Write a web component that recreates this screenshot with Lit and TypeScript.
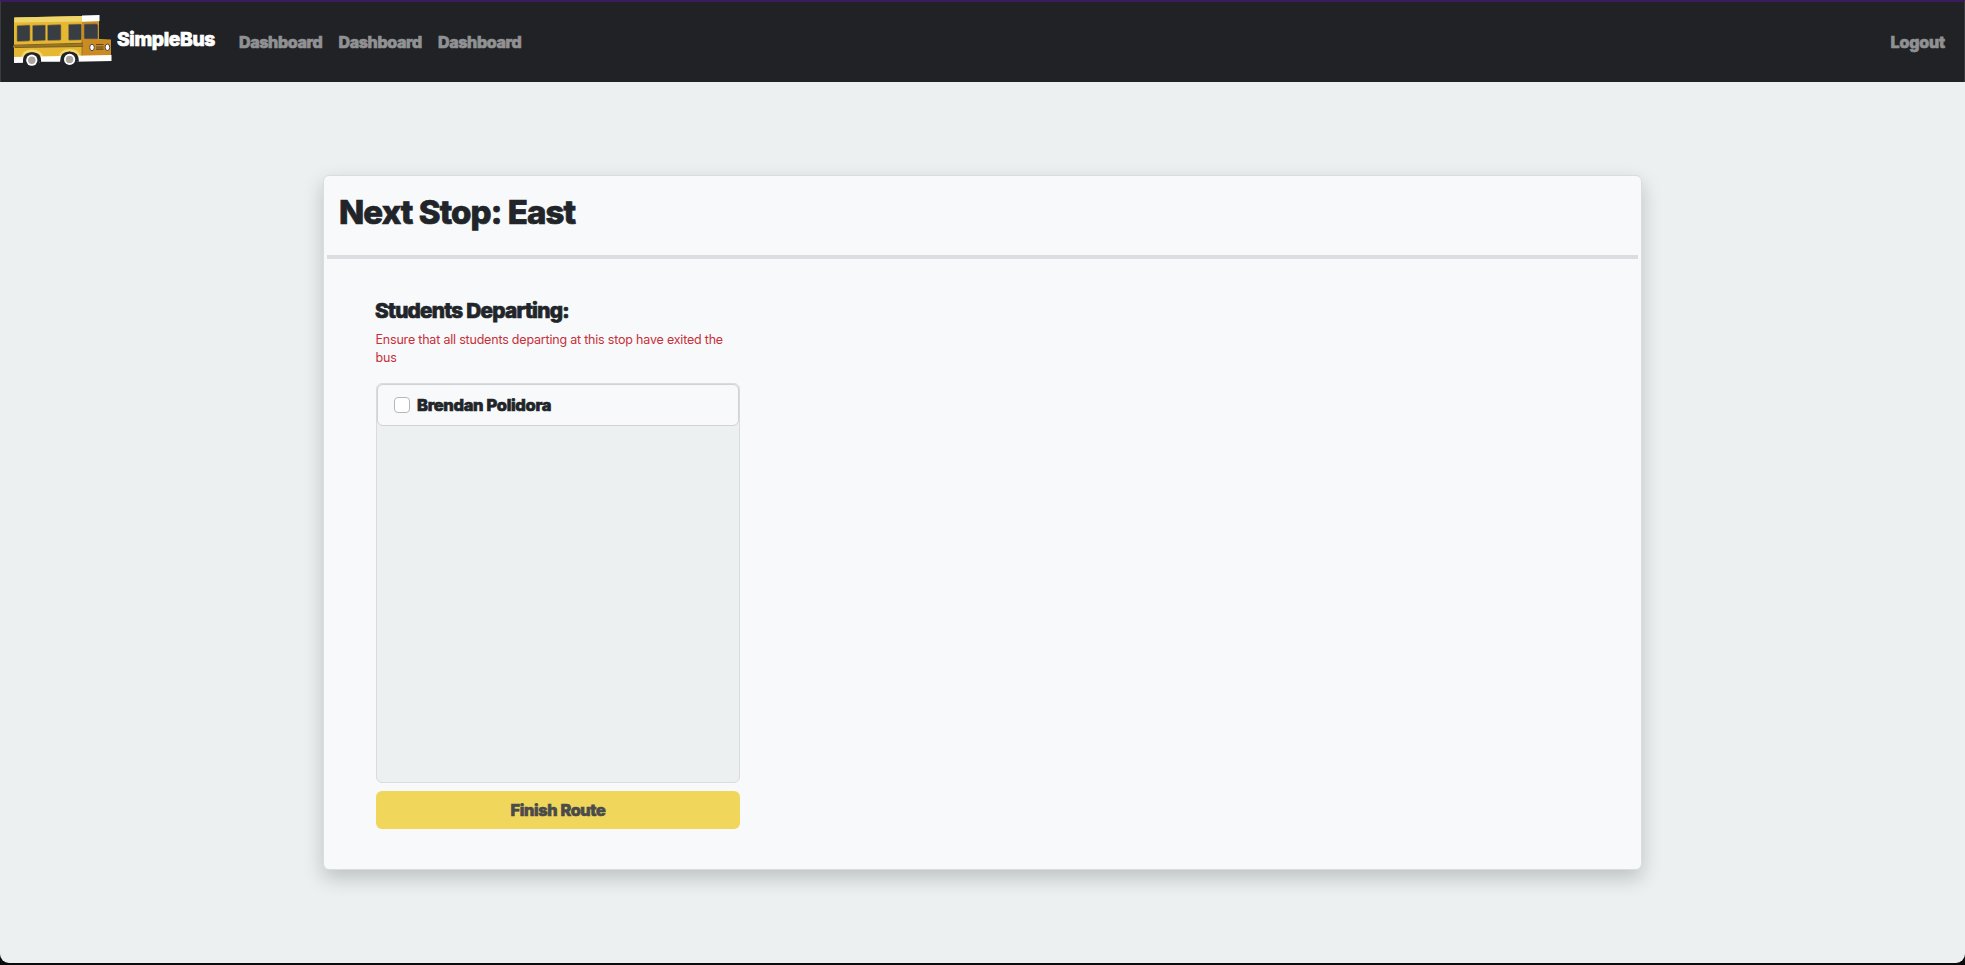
import { LitElement, html, css, svg } from "lit";
import { customElement, property } from "lit/decorators.js";

@customElement("bus-logo")
class BusLogo extends LitElement {
  static styles = css`
    :host { display: block; width: 102px; height: 54px; }
    svg { display: block; }
  `;
  render() {
    const wheel = (x: number, y: number) => svg`
      <circle cx=${x} cy=${y} r="7.6" fill="#202327"/>
      <circle cx=${x} cy=${y} r="5.6" fill="#fff"/>
      <circle cx=${x} cy=${y} r="3.7" fill="#aba49f"/>`;
    return html`<svg width="102" height="54" viewBox="13 13 102 54">
      <path d="M14 17.5 L82 16 L99 16 L99 39 L111 40 L111 56 L14 58 Z" fill="#e5b733"/>
      <path d="M14.5 17.5 L82 16 L82 21.5 L14.5 22.5 Z" fill="#efd66b"/>
      <path d="M82 21.5H98.5V39.5H111V55.5L82 56Z" fill="#c98b22"/>
      <path d="M82 40V56" stroke="#a87520"/>
      <path d="M82 15.5L99.5 15V21L82 21.7Z" fill="#fff"/>
      <g fill="#383d44" stroke="#a98330" stroke-width=".6">
        <path d="M18 25.5L29 25Q30 25 30 26V40Q30 41 29 41L18 41.5Q17 41.5 17 40.5V26.5Q17 25.5 18 25.5Z"/>
        <path d="M33.5 25.3L44.5 25Q45.5 25 45.5 26V39.5Q45.5 40.5 44.5 40.5L33.5 41Q32.5 41 32.5 40V26.3Q32.5 25.3 33.5 25.3Z"/>
        <path d="M48.5 25L60 24.6Q61 24.6 61 25.6V39.3Q61 40.2 60 40.2L48.5 40.6Q47.5 40.6 47.5 39.6V26Q47.5 25 48.5 25Z"/>
        <path d="M69.5 24.3L80.5 24Q81.5 24 81.5 25V39Q81.5 40 80.5 40L69.5 40.2Q68.5 40.2 68.5 39.2V25.3Q68.5 24.3 69.5 24.3Z"/>
        <path d="M85 24L96.5 23.8L98 25V39H85Q84 39 84 38V25Q84 24 85 24Z"/>
      </g>
      <path d="M12 45.5L83 43.4V46.6L12 47.5Z" fill="#9c7523"/>
      <path d="M12 45.2L83 43.2M15 47.5L83 46.5" stroke="#65501f" stroke-width=".8"/>
      <path d="M21 58Q22 49.5 32 49.5T43 57" fill="#f4d669"/>
      <path d="M59 57Q60 49 69.5 49T80 56" fill="#f4d669"/>
      <path d="M14 57L111.5 55V61L14 63Z" fill="#fff"/>
      <path d="M23 63Q22 52.3 32 52.3T41 62.6Z" fill="#202327"/>
      <path d="M60 62Q60 51.6 69.5 51.6T79 61.7Z" fill="#202327"/>
      <path d="M40 62.5H61" stroke="#202327" stroke-width="1.5"/>
      ${wheel(31.8, 60.2)}${wheel(69.6, 59.4)}
      <path d="M96 44.5H103.5M96 47H103.5M96 49.2H103.5" stroke="#5c431e" stroke-width="1.2"/>
      <ellipse cx="92" cy="47.5" rx="2.3" ry="3.2" fill="#fff" stroke="#4b4438" stroke-width="1"/>
      <ellipse cx="107.4" cy="47.3" rx="2.3" ry="3.2" fill="#fff" stroke="#4b4438" stroke-width="1"/>
    </svg>`;
  }
}

@customElement("student-row")
class StudentRow extends LitElement {
  @property() name = "";
  static styles = css`
    :host {
      display: flex; align-items: center; box-sizing: border-box; height: 42px;
      padding-left: 16px; border: 1px solid #d0d2d4; border-radius: 6px; background: #f8f9fa;
      font: 800 16.5px/1 Inter, sans-serif; color: #212529;
    }
    input {
      appearance: none; width: 16px; height: 16px; margin: 0 7px 0 0; box-sizing: border-box;
      border: 1px solid #b6b7b9; border-radius: 4px; background: #fff;
    }
    label { display: flex; align-items: center; }
    span { white-space: nowrap; -webkit-text-stroke: .7px currentColor; stroke-linejoin: round; letter-spacing: -.33px; }
  `;
  render() {
    return html`<label><input type="checkbox"><span>${this.name}</span></label>`;
  }
}

@customElement("app-root")
class AppRoot extends LitElement {
  static styles = css`
    :host { display: block; height: 965px; background: #0b0b0d; overflow: hidden; font-family: Inter, sans-serif; color: #212529; }
    * { box-sizing: border-box; }
    .window { height: 963px; background: #ecf0f1; border-radius: 0 0 9px 9px; overflow: hidden; }
    nav { display: flex; align-items: center; height: 82px; padding: 0 19px 0 12px; background: #212226; border: 1px solid #3b3c40; border-top: 2px solid #3c1a5e; border-bottom: 0; }
    .round { font-weight: 800; line-height: 1; white-space: nowrap; -webkit-text-stroke: .7px currentColor; stroke-linejoin: round; }
    bus-logo { margin: 0 0 5px 0; }
    .brand { width: 100px; color: #fff; font-size: 19.2px; letter-spacing: -.35px; margin: 0 0 4px 2px; }
    .links { display: flex; gap: 16px; margin-left: 22px; color: #909193; font-size: 16px; letter-spacing: -.35px; }
    .links .round { width: 83.5px; }
    .logout { margin-left: auto; color: #909193; font-size: 16px; letter-spacing: -.15px; }
    .card { width: 1319px; height: 695px; margin: 93px 0 0 323px; background: #f7f9fb; border: 1px solid #dadddf; border-radius: 6px; box-shadow: 0 8px 20px rgba(0,0,0,.2); padding: 0 3px; }
    header { height: 79px; padding: 20px 0 0 12px; }
    h1 { margin: 0; font-size: 33px; letter-spacing: -.9px; -webkit-text-stroke-width: 1.2px; }
    hr { height: 4px; margin: 0; border: 0; background: #dbdde2; }
    .column { width: 364px; margin: 42px 0 0 49px; }
    h2 { margin: 0 0 0 -1px; font-size: 20.8px; letter-spacing: -.76px; }
    p { margin: 9px 0 16px -.5px; font-size: 12.5px; letter-spacing: -.2px; line-height: 18px; color: #c82f38; }
    .list { height: 400px; border: 1px solid #d8dce0; border-radius: 6px; background: #ecf0f1; }
    button { display: block; width: 364px; height: 38px; margin-top: 8px; padding: 0; border: 0; border-radius: 6px; background: #f0d65b; color: #4b4b4b; font-family: Inter, sans-serif; font-size: 16.3px; letter-spacing: -.35px; }
  `;
  render() {
    return html`<div class="window">
      <nav>
        <bus-logo></bus-logo>
        <div class="brand round">SimpleBus</div>
        <div class="links">${["Dashboard", "Dashboard", "Dashboard"].map((t) => html`<div class="round">${t}</div>`)}</div>
        <div class="logout round">Logout</div>
      </nav>
      <main class="card">
        <header><h1 class="round">Next Stop: East</h1></header>
        <hr>
        <section class="column">
          <h2 class="round">Students Departing:</h2>
          <p>Ensure that all students departing at this stop have exited the bus</p>
          <div class="list"><student-row name="Brendan Polidora"></student-row></div>
          <button class="round">Finish Route</button>
        </section>
      </main>
    </div>`;
  }
}
